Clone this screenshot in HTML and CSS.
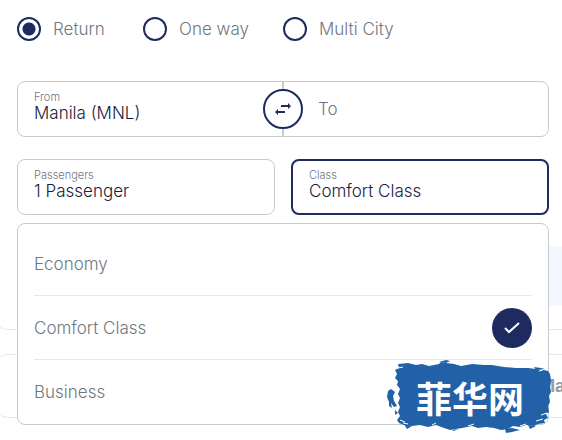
FILE: index.html
```
<!DOCTYPE html>
<html lang="en">
<head>
  <meta charset="UTF-8" />
  <meta name="viewport" content="width=device-width, initial-scale=1.0"/>
  <title>Flight Booking</title>
  <link rel="stylesheet" href="styles.css">
</head>
<body>

<form class="booking">
  <!-- Trip type -->
  <div class="trip-types">
    <label class="trip"><input type="radio" name="trip" checked /> Return</label>
    <label class="trip"><input type="radio" name="trip" /> One way</label>
    <label class="trip"><input type="radio" name="trip" /> Multi City</label>
  </div>

  <!-- Route -->
  <div class="route">
    <div class="field">
      <label for="from">From</label>
      <input type="text" id="from" value="Manila (MNL)" />
    </div>
    <div class="field field-to">
      <input type="text" id="to" placeholder="To" aria-label="To" />
    </div>
    <button type="button" class="swap-btn" aria-label="Swap">
      <svg width="18" height="14" viewBox="0 0 18 14">
        <path d="M7 4H15M3 10H11" stroke="#1d2b5f" stroke-width="2" fill="none"/>
        <path d="M14 1L17 4L14 7ZM4 7L1 10L4 13Z" fill="#1d2b5f"/>
      </svg>
    </button>
  </div>

  <div class="options">
    <div class="field box">
      <label for="passengers">Passengers</label>
      <select id="passengers">
        <option>1 Passenger</option>
      </select>
    </div>
    <div class="field box active">
      <label for="class">Class</label>
      <select id="class">
        <option>Comfort Class</option>
      </select>
    </div>

    <!-- Class menu -->
    <div class="menu">
      <button type="button" class="menu-item">Economy</button>
      <button type="button" class="menu-item">Comfort Class
        <span class="check">
          <svg width="18" height="14" viewBox="0 0 18 14">
            <path d="M2 7L6 11L16 2" stroke="#fff" stroke-width="2" fill="none"/>
          </svg>
        </span>
      </button>
      <button type="button" class="menu-item">Business</button>
    </div>
  </div>
</form>

<!-- Content below the form -->
<div class="card card-results">
  <div class="highlight"></div>
</div>
<div class="card card-dates"><span>Ma</span></div>

<div class="watermark">
  <svg class="brush" width="168" height="74" viewBox="0 0 168 74">
    <path fill="#2261a8" d="M12 4L22 3L30 5L36 4L43 6L53 4L55 2L60 3L68 4L75 6L86 4L98 5L106 5L118 7L130 8L142 8L150 9L158 10L162 11L164 14L165 20L164 26L165 32L163 36L164 42L162 46L163 52L160 54L162 58L158 60L159 63L152 64L148 66L140 65L134 67L127 66L122 69L115 70L108 68L100 67L92 68L86 66L76 68L64 70L58 68L50 65L42 67L34 65L26 66L18 65L13 63L11 60L14 56L12 52L14 47L12 43L14 38L12 34L14 29L11 25L12 21L9 18L11 14L9 10L13 8Z"/>
    <path fill="#2261a8" d="M2 31L5 29L9 32L7 36L8 41L11 46L8 47L5 43L6 48L3 46L3 42L1 37ZM9 50L12 53L9 55ZM119 69L126 68L134 70L126 72L120 73ZM53 2L60 0L64 1L60 3ZM142 65L150 66L144 69ZM18 64L26 66L21 69ZM148 7L155 8L159 9L150 10ZM66 70L72 69L68 71Z"/>
    <path stroke="#fff" stroke-width="1" fill="none" d="M14 60L19 62M134 66L140 64M153 11L157 10M155 55L161 53M46 65L50 63M12 8L17 7M82 66L88 64M150 61L157 59M17 63L22 64"/>
  </svg>
  <span lang="zh">菲华网</span>
</div>

</body>
</html>
```
FILE: styles.css
```
* {
  box-sizing: border-box;
}

body {
  margin: 0;
  position: relative;
  min-height: 100vh;
  overflow: hidden;
  background: #fff;
  font-family: Inter, "Liberation Sans", sans-serif;
  font-size: 17px;
  font-weight: 300;
  color: #6f7782;
}

input,
select,
button {
  font: inherit;
  color: inherit;
  margin: 0;
  padding: 0;
  border: none;
  outline: none;
  background: none;
  appearance: none;
}

.booking {
  padding: 17px 13px 0 17px;
}

/* Trip type */
.trip-types {
  display: grid;
  grid-template-columns: 126px 140px auto;
  margin-bottom: 40px;
}

.trip {
  display: flex;
  align-items: center;
  gap: 12px;
  line-height: 24px;
}

.trip input {
  width: 24px;
  height: 24px;
  border: 2px solid #1d2b5f;
  border-radius: 50%;
}

.trip input:checked {
  background: radial-gradient(circle, #1d2b5f 6px, transparent 7px);
}

/* Fields */
.route {
  position: relative;
  display: grid;
  grid-template-columns: 1fr 1fr;
  border: 1px solid #c3cbd3;
  border-radius: 8px;
  margin-bottom: 22px;
}

.field {
  display: flex;
  flex-direction: column;
  height: 54px;
  padding: 9px 16px;
}

.field label {
  font-size: 11px;
  line-height: 12px;
}

.field input,
.field select {
  width: 100%;
  height: 20px;
  line-height: 20px;
  color: #1a1c3a;
}

.field-to {
  justify-content: center;
  margin-left: -1px;
  padding-left: 34px;
  border-left: 2px solid #c3cbd3;
}

.field-to input::placeholder {
  color: #6f7782;
  opacity: 1;
}

.swap-btn {
  position: absolute;
  top: 50%;
  left: 50%;
  transform: translate(-50%, -50%);
  display: flex;
  align-items: center;
  justify-content: center;
  width: 40px;
  height: 40px;
  border: 2px solid #1d2b5f;
  border-radius: 50%;
  background: #fff;
}

.options {
  position: relative;
  display: grid;
  grid-template-columns: 1fr 1fr;
  gap: 16px;
}

.box {
  height: 56px;
  border: 1px solid #c3cbd3;
  border-radius: 8px;
}

.box.active {
  padding: 8px 16px;
  border: 2px solid #1d2b5f;
}

/* Class menu */
.menu {
  position: absolute;
  top: 100%;
  left: 0;
  right: 0;
  z-index: 1;
  margin-top: 8px;
  padding: 8px 16px 0;
  border: 1px solid #c3cbd3;
  border-radius: 8px;
  background: #fff;
}

.menu-item {
  display: flex;
  align-items: center;
  justify-content: space-between;
  width: 100%;
  height: 64px;
  border-bottom: 1px solid #e6e9ec;
}

.menu-item:last-child {
  border-bottom: none;
}

.check {
  display: flex;
  align-items: center;
  justify-content: center;
  width: 40px;
  height: 40px;
  border-radius: 50%;
  background: #1d2b5f;
}

/* Content below the form */
.card {
  margin: 0 -16px 24px -8px;
  border: 1px solid #e6e9ec;
  border-radius: 16px;
}

.card-results {
  margin-top: 16px;
  padding: 15px 0 23px 24px;
  border-top: none;
  border-radius: 0 0 16px 16px;
}

.highlight {
  height: 60px;
  background: #f3f8ff;
}

.card-dates {
  display: flex;
  align-items: center;
  justify-content: flex-end;
  height: 64px;
  padding-right: 12px;
  font-weight: 700;
  color: #969ba5;
}

/* Watermark */
.watermark {
  position: absolute;
  right: 8px;
  bottom: 8px;
  z-index: 2;
  display: grid;
  place-items: center;
}

.brush,
.watermark span {
  grid-area: 1 / 1;
}

.watermark span {
  font-family: "Noto Sans CJK SC", sans-serif;
  font-size: 36px;
  font-weight: 700;
  line-height: 40px;
  color: #fff;
}
```
